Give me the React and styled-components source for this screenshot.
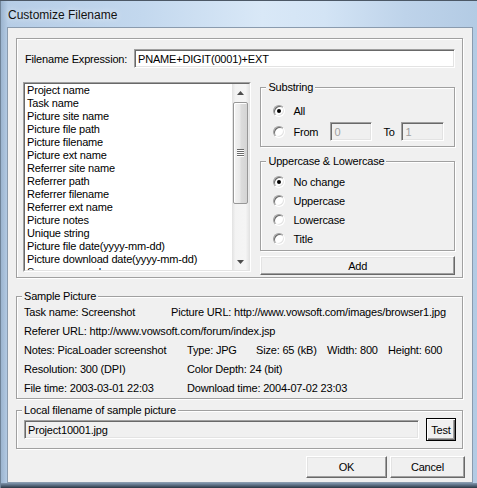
import React from "react";
import styled, { createGlobalStyle } from "styled-components";

const GlobalStyle = createGlobalStyle`
  html, body {
    margin: 0;
    padding: 0;
    background: #ffffff;
  }
  body {
    font-family: "Liberation Sans", Arial, sans-serif;
    font-size: 11px;
    letter-spacing: -0.18px;
    color: #000;
  }
  input, button {
    letter-spacing: -0.18px;
  }
`;

const Window = styled.div`
  width: 477px;
  height: 488px;
  box-sizing: border-box;
  padding: 0 4px 5px 7px;
  display: flex;
  flex-direction: column;
  overflow: hidden;
  background: linear-gradient(
      180deg,
      rgba(0, 0, 0, 0) 0,
      rgba(0, 0, 0, 0) 483px,
      #8096ad 483px,
      #4d5e71 486px,
      #2c3743 488px
    ),
    linear-gradient(
      90deg,
      #98b1cc 0,
      #b6cde6 8px,
      #c3d8ee 30%,
      #d9e8f7 55%,
      #d3e4f5 68%,
      #bed3ea 85%,
      #b3cbe4 100%
    );
  box-shadow: inset 0 1px 0 #4c5866, inset 1px 0 0 #6f8398;
`;

const TitleBar = styled.div`
  flex: none;
  height: 27px;
  box-sizing: border-box;
  padding: 2px 0 0 1px;
  display: flex;
  align-items: center;
  font-family: "Liberation Sans", Arial, sans-serif;
  font-size: 12px;
  letter-spacing: 0;
  color: #121212;
  text-shadow: 0 0 6px rgba(255, 255, 255, 0.9);
`;

const Client = styled.div`
  flex: 1;
  display: flex;
  flex-direction: column;
  background: #f0f0f0;
  border: 1px solid #8a9bae;
  padding: 10px 9px 0 8px;
`;

const Panel = styled.div`
  height: 240px;
  box-sizing: border-box;
  border: 1px solid #a0a0a0;
  box-shadow: inset 1px 1px 0 #fff, 1px 1px 0 #fff;
  padding: 10px 7px 0 6px;
  display: flex;
  flex-direction: column;
`;

const ExpressionRow = styled.div`
  display: flex;
  align-items: center;
  height: 19px;
`;

const Label = styled.span`
  padding-left: 2px;
  white-space: nowrap;
`;

const TextBox = styled.input`
  box-sizing: border-box;
  width: ${(p) => p.$w}px;
  height: 19px;
  margin: 0;
  margin-left: ${(p) => (p.$push ? "auto" : "0")};
  padding: 0 3px;
  font-family: "Liberation Sans", Arial, sans-serif;
  font-size: 11px;
  color: ${(p) => (p.disabled ? "#a0a0a0" : "#000")};
  background: ${(p) => (p.$grey ? "#f0f0f0" : "#fff")};
  border: 1px solid;
  border-color: #a0a0a0 #fff #fff #a0a0a0;
  box-shadow: inset 1px 1px 0 #696969, inset -1px -1px 0 #e3e3e3;
  outline: none;
`;

const MainRow = styled.div`
  display: flex;
  align-items: flex-start;
  margin-top: 14px;
`;

const ListBox = styled.div`
  width: 230px;
  height: 190px;
  box-sizing: border-box;
  border: 1px solid;
  border-color: #a0a0a0 #fff #fff #a0a0a0;
  display: flex;
`;

const ListInner = styled.div`
  flex: 1;
  display: flex;
  background: #fff;
  border: 1px solid;
  border-color: #696969 #e3e3e3 #e3e3e3 #696969;
  overflow: hidden;
`;

const Items = styled.ul`
  flex: 1;
  margin: 0;
  padding: 0 0 0 2px;
  list-style: none;
  overflow: hidden;
`;

const Item = styled.li`
  height: 13px;
  line-height: 13px;
  white-space: nowrap;
`;

const ScrollBar = styled.div`
  width: 17px;
  flex: none;
  display: flex;
  flex-direction: column;
  background: linear-gradient(90deg, #e2e2e2 0, #f3f3f3 20%, #f5f5f5 80%, #e6e6e6 100%);
`;

const ArrowButton = styled.div`
  height: 17px;
  flex: none;
  display: flex;
  align-items: center;
  justify-content: center;
`;

const Track = styled.div`
  flex: 1;
  display: flex;
  flex-direction: column;
  padding: 1px 0 0 1px;
`;

const Thumb = styled.div`
  height: 102px;
  width: 15px;
  box-sizing: border-box;
  border: 1px solid #979797;
  border-radius: 2px;
  background: linear-gradient(90deg, #f4f4f4 0, #e9e9e9 45%, #dcdcdc 55%, #d4d4d4 100%);
  box-shadow: inset 1px 1px 0 #fff;
  display: flex;
  align-items: center;
  justify-content: center;
`;

const SideColumn = styled.div`
  width: 196px;
  margin-left: 9px;
  margin-top: -1px;
  display: flex;
  flex-direction: column;
`;

const Group = styled.fieldset`
  margin: 0;
  margin-top: ${(p) => p.$top || 0}px;
  padding: 0;
  min-width: 0;
  border: 1px solid #a0a0a0;
  box-shadow: inset 1px 1px 0 #fff, 1px 1px 0 #fff;
`;

const Caption = styled.legend`
  margin-left: ${(p) => p.$left || 5}px;
  padding: 0 2px;
  height: 13px;
  line-height: 13px;
  background: #f0f0f0;
  white-space: nowrap;
`;

const GroupBody = styled.div`
  display: flex;
  flex-direction: column;
  padding: ${(p) => p.$pad};
`;

const RadioRow = styled.label`
  display: flex;
  align-items: center;
  height: 19px;
  margin-top: ${(p) => p.$gap || 0}px;
  white-space: nowrap;
`;

const RadioMark = styled.span`
  width: 12px;
  height: 12px;
  flex: none;
  box-sizing: border-box;
  border-radius: 50%;
  border: 1px solid;
  border-color: #a0a0a0 #fff #fff #a0a0a0;
  background: #fff;
  box-shadow: inset 1px 1px 0 #696969, inset -1px -1px 0 #e3e3e3;
  margin-right: 8px;
  display: flex;
  align-items: center;
  justify-content: center;
  &::after {
    content: "";
    width: 4px;
    height: 4px;
    border-radius: 50%;
    background: ${(p) => (p.$on ? "#000" : "transparent")};
  }
`;

const FieldLabel = styled.span`
  width: ${(p) => p.$w}px;
  flex: none;
  margin-left: ${(p) => p.$ml || 0}px;
`;

const Button = styled.button`
  box-sizing: border-box;
  width: ${(p) => (p.$w ? `${p.$w}px` : "100%")};
  height: ${(p) => p.$h}px;
  margin: 0;
  margin-top: ${(p) => p.$top || 0}px;
  margin-left: ${(p) => p.$left || 0}px;
  padding: 0;
  flex: none;
  font-family: "Liberation Sans", Arial, sans-serif;
  font-size: 11px;
  color: #000;
  background: #f0f0f0;
  border: 1px solid;
  border-color: #fff #696969 #696969 #fff;
  box-shadow: inset -1px -1px 0 #a0a0a0, inset 1px 1px 0 #e3e3e3;
`;

const DefaultButton = styled(Button)`
  border: 1px solid #000;
  box-shadow: inset 1px 1px 0 #fff, inset -1px -1px 0 #696969, inset -2px -2px 0 #a0a0a0;
`;

const InfoRow = styled.div`
  display: flex;
  height: 19px;
  line-height: 19px;
  white-space: nowrap;
`;

const Cell = styled.span`
  flex: none;
  width: ${(p) => (p.$w ? `${p.$w}px` : "auto")};
`;

const FileRow = styled.div`
  display: flex;
  align-items: center;
  height: 23px;
`;

const Footer = styled.div`
  display: flex;
  justify-content: flex-end;
  margin-top: 7px;
  margin-right: -2px;
`;

const Arrow = ({ up }) => (
  <svg width="7" height="4" viewBox="0 0 7 4">
    <path d={up ? "M0 4 L3.5 0 L7 4 Z" : "M0 0 L3.5 4 L7 0 Z"} fill="#4d4d4d" />
  </svg>
);

const Grip = () => (
  <svg width="7" height="8" viewBox="0 0 7 8">
    {[0, 2, 4, 6].map((y) => (
      <g key={y}>
        <rect x="0" y={y} width="7" height="1" fill="#6a6a6a" />
        <rect x="0" y={y + 1} width="7" height="1" fill="#fff" />
      </g>
    ))}
  </svg>
);

const fields = [
  "Project name",
  "Task name",
  "Picture site name",
  "Picture file path",
  "Picture filename",
  "Picture ext name",
  "Referrer site name",
  "Referrer path",
  "Referrer filename",
  "Referrer ext name",
  "Picture notes",
  "Unique string",
  "Picture file date(yyyy-mm-dd)",
  "Picture download date(yyyy-mm-dd)",
  "Sequence number",
  "Current date(yyyy-mm-dd)",
];

const caseOptions = ["No change", "Uppercase", "Lowercase", "Title"];

const App = () => {
  return (
    <>
      <GlobalStyle />
      <Window>
        <TitleBar>Customize Filename</TitleBar>
        <Client>
          <Panel>
            <ExpressionRow>
              <Label>Filename Expression:</Label>
              <TextBox $w={321} $push defaultValue="PNAME+DIGIT(0001)+EXT" />
            </ExpressionRow>
            <MainRow>
              <ListBox>
                <ListInner>
                  <Items>
                    {fields.map((f) => (
                      <Item key={f}>{f}</Item>
                    ))}
                  </Items>
                  <ScrollBar>
                    <ArrowButton>
                      <Arrow up />
                    </ArrowButton>
                    <Track>
                      <Thumb>
                        <Grip />
                      </Thumb>
                    </Track>
                    <ArrowButton>
                      <Arrow />
                    </ArrowButton>
                  </ScrollBar>
                </ListInner>
              </ListBox>
              <SideColumn>
                <Group>
                  <Caption>Substring</Caption>
                  <GroupBody $pad="7px 0 5px 12px">
                    <RadioRow>
                      <RadioMark $on />
                      All
                    </RadioRow>
                    <RadioRow $gap={2}>
                      <RadioMark />
                      <FieldLabel $w={37}>From</FieldLabel>
                      <TextBox $w={42} $grey disabled defaultValue="0" />
                      <FieldLabel $w={18} $ml={11}>
                        To
                      </FieldLabel>
                      <TextBox $w={43} $grey disabled defaultValue="1" />
                    </RadioRow>
                  </GroupBody>
                </Group>
                <Group $top={8}>
                  <Caption>Uppercase &amp; Lowercase</Caption>
                  <GroupBody $pad="4px 0 2px 12px">
                    {caseOptions.map((o, i) => (
                      <RadioRow key={o}>
                        <RadioMark $on={i === 0} />
                        {o}
                      </RadioRow>
                    ))}
                  </GroupBody>
                </Group>
                <Button $h={19} $top={5}>
                  Add
                </Button>
              </SideColumn>
            </MainRow>
          </Panel>

          <Group $top={12}>
            <Caption>Sample Picture</Caption>
            <GroupBody $pad="0 0 0 7px">
              <InfoRow>
                <Cell $w={147}>Task name: Screenshot</Cell>
                <Cell>Picture URL: http://www.vowsoft.com/images/browser1.jpg</Cell>
              </InfoRow>
              <InfoRow>
                <Cell>Referer URL: http://www.vowsoft.com/forum/index.jsp</Cell>
              </InfoRow>
              <InfoRow>
                <Cell $w={163}>Notes: PicaLoader screenshot</Cell>
                <Cell $w={69}>Type: JPG</Cell>
                <Cell $w={71}>Size: 65 (kB)</Cell>
                <Cell $w={61}>Width: 800</Cell>
                <Cell>Height: 600</Cell>
              </InfoRow>
              <InfoRow>
                <Cell $w={163}>Resolution: 300 (DPI)</Cell>
                <Cell>Color Depth: 24 (bit)</Cell>
              </InfoRow>
              <InfoRow>
                <Cell $w={163}>File time: 2003-03-01 22:03</Cell>
                <Cell>Download time: 2004-07-02 23:03</Cell>
              </InfoRow>
            </GroupBody>
          </Group>

          <Group $top={5}>
            <Caption>Local filename of sample picture</Caption>
            <GroupBody $pad="1px 6px 7px 7px">
              <FileRow>
                <TextBox $w={396} $grey readOnly defaultValue="Project10001.jpg" />
                <DefaultButton $w={30} $h={23} $left={7}>
                  Test
                </DefaultButton>
              </FileRow>
            </GroupBody>
          </Group>

          <Footer>
            <Button $w={81} $h={22}>
              OK
            </Button>
            <Button $w={75} $h={22} $left={3}>
              Cancel
            </Button>
          </Footer>
        </Client>
      </Window>
    </>
  );
};

export default App;
